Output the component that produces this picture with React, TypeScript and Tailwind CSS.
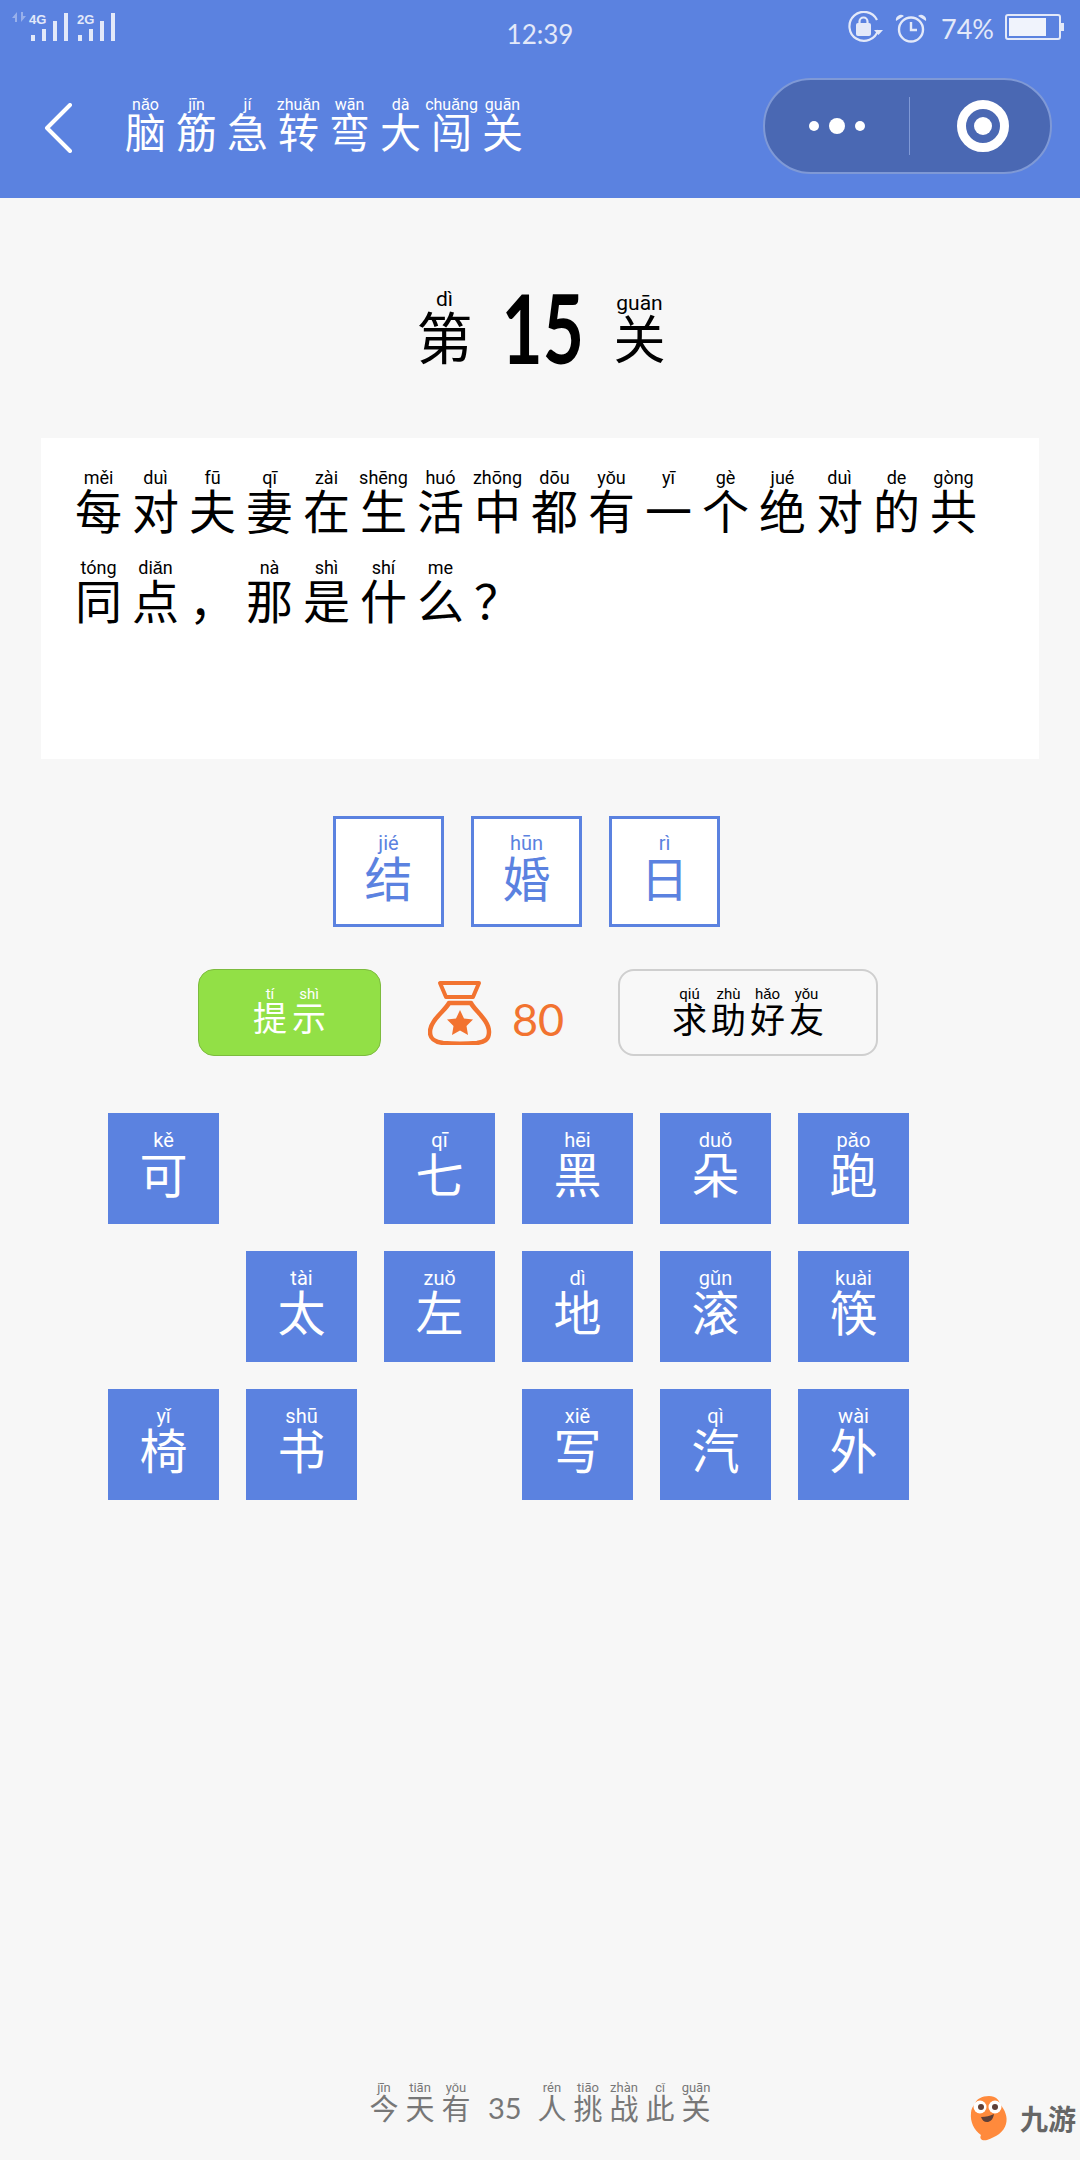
const blue = "#5B82E0";

type HanProps = {
  py?: string;
  ch: string;
  cell: string;
  pyCls: string;
  chCls: string;
};

function Han({ py, ch, cell, pyCls, chCls }: HanProps) {
  return (
    <span className={`flex shrink-0 flex-col items-center ${cell}`}>
      <span className={`whitespace-nowrap font-['Roboto',sans-serif] ${pyCls}`}>{py ?? "\u00a0"}</span>
      <span className={`font-['Noto_Sans_CJK_SC',sans-serif] leading-none ${chCls}`}>{ch}</span>
    </span>
  );
}

function SignalBars({ x }: { x: number }) {
  return (
    <>
      <rect x={x} y="35" width="4" height="6" />
      <rect x={x + 11} y="29" width="4" height="12" />
      <rect x={x + 22} y="21" width="4" height="20" />
      <rect x={x + 33} y="13" width="4" height="28" />
    </>
  );
}

function StatusBar() {
  return (
    <div className="grid h-[50px] grid-cols-3 text-[#e3e9f9]">
      <svg width="130" height="50" viewBox="0 0 130 50" fill="currentColor">
        <path d="M12 18l5-6v10h-2v-4zM26 16l-5 6V12h2v4z" opacity="0.45" />
        <text x="29" y="24" fontSize="13" fontWeight="700" fontFamily="Liberation Sans, sans-serif">4G</text>
        <SignalBars x={31} />
        <text x="77" y="24" fontSize="13" fontWeight="700" fontFamily="Liberation Sans, sans-serif">2G</text>
        <SignalBars x={78} />
      </svg>
      <div className="flex justify-center pt-[19px] font-['Lato',sans-serif] text-[26px] leading-[30px]">12:39</div>
      <div className="flex items-start justify-end pt-[11px] pr-[16px]">
        <svg width="37" height="32" viewBox="0 0 37 32" fill="none" stroke="currentColor" strokeWidth="2.200">
          <path d="M31 19a14.500 14.500 0 1 1-1-10" />
          <path d="M27 19h9l-4.500 5z" fill="currentColor" stroke="none" />
          <rect x="9" y="12" width="15" height="13" rx="2" fill="currentColor" stroke="none" />
          <path d="M12.500 13v-2.500a4 4 0 0 1 8 0V13" />
        </svg>
        <svg className="ml-[11px] mt-[2px]" width="32" height="30" viewBox="0 0 32 30" fill="none" stroke="currentColor" strokeWidth="2.400">
          <circle cx="16" cy="16.500" r="12" />
          <path d="M16 9v8h6" />
          <path d="M1 8a5 5 0 0 1 8-5zM31 8a5 5 0 0 0-8-5z" fill="currentColor" stroke="none" />
        </svg>
        <span className="ml-[14px] mt-[3px] font-['Lato',sans-serif] text-[27px] leading-[30px]">74%</span>
        <div className="ml-[11px] mt-[3px] flex items-center">
          <div className="h-[26px] w-[56px] rounded-[3px] border-2 border-[#e3e9f9] p-[2px]">
            <div className="h-full w-[37px] bg-[#f0f3fc]" />
          </div>
          <div className="h-[8px] w-[3px] bg-[#e3e9f9]" />
        </div>
      </div>
    </div>
  );
}

const navTitle: [string, string][] = [
  ["nǎo", "脑"], ["jīn", "筋"], ["jí", "急"], ["zhuǎn", "转"],
  ["wān", "弯"], ["dà", "大"], ["chuǎng", "闯"], ["guān", "关"],
];

function NavBar() {
  return (
    <div className="flex h-[148px] items-start text-white">
      <svg className="ml-[44px] mt-[53px]" width="29" height="50" viewBox="0 0 29 50" fill="none" stroke="white" strokeWidth="4" strokeLinecap="round" strokeLinejoin="round">
        <path d="M26 2L3 25l23 23" />
      </svg>
      <div className="ml-[47px] mt-[46px] flex">
        {navTitle.map(([py, ch]) => (
          <Han key={py} py={py} ch={ch} cell="w-[51px]" pyCls="-mb-[3px] text-[16px] leading-[17px]" chCls="text-[41px]" />
        ))}
      </div>
      <div className="ml-auto mr-[28px] mt-[28px] flex h-[96px] w-[289px] items-center rounded-[48px] border-2 border-[#7f99d6] bg-[#4A68B3]">
        <div className="flex w-[144px] items-center justify-center gap-[10px]">
          <span className="h-[10px] w-[10px] rounded-full bg-white" />
          <span className="h-[16px] w-[16px] rounded-full bg-white" />
          <span className="h-[10px] w-[10px] rounded-full bg-white" />
        </div>
        <div className="h-[58px] w-px bg-[#7f99d6]" />
        <div className="ml-[47px] flex h-[52px] w-[52px] items-center justify-center rounded-full border-[9px] border-white">
          <span className="h-[18px] w-[18px] rounded-full bg-white" />
        </div>
      </div>
    </div>
  );
}

const questionRows: [string | undefined, string][][] = [
  [
    ["měi", "每"], ["duì", "对"], ["fū", "夫"], ["qī", "妻"], ["zài", "在"], ["shēng", "生"], ["huó", "活"], ["zhōng", "中"],
    ["dōu", "都"], ["yǒu", "有"], ["yī", "一"], ["gè", "个"], ["jué", "绝"], ["duì", "对"], ["de", "的"], ["gòng", "共"],
  ],
  [
    ["tóng", "同"], ["diǎn", "点"], [undefined, "，"], ["nà", "那"], ["shì", "是"], ["shí", "什"], ["me", "么"], [undefined, "？"],
  ],
];

type Tile = { py: string; ch: string } | null;

const tiles: Tile[] = [
  { py: "kě", ch: "可" }, null, { py: "qī", ch: "七" }, { py: "hēi", ch: "黑" }, { py: "duǒ", ch: "朵" }, { py: "pǎo", ch: "跑" },
  null, { py: "tài", ch: "太" }, { py: "zuǒ", ch: "左" }, { py: "dì", ch: "地" }, { py: "gǔn", ch: "滚" }, { py: "kuài", ch: "筷" },
  { py: "yǐ", ch: "椅" }, { py: "shū", ch: "书" }, null, { py: "xiě", ch: "写" }, { py: "qì", ch: "汽" }, { py: "wài", ch: "外" },
];

const answers: [string, string][] = [["jié", "结"], ["hūn", "婚"], ["rì", "日"]];

const friendHelp: [string, string][] = [["qiú", "求"], ["zhù", "助"], ["hǎo", "好"], ["yǒu", "友"]];

const footerLeft: [string, string][] = [["jīn", "今"], ["tiān", "天"], ["yǒu", "有"]];
const footerRight: [string, string][] = [["rén", "人"], ["tiāo", "挑"], ["zhàn", "战"], ["cǐ", "此"], ["guān", "关"]];

function MoneyBag() {
  return (
    <svg width="64" height="64" viewBox="0 0 64 64" fill="none" stroke="#F27330" strokeWidth="4.500" strokeLinejoin="round">
      <path d="M12 2h39l-6 14H18z" strokeWidth="4" />
      <path d="M21 22h22c3 7 18 17 18 29 0 8-5 10-12 11-11 1-23 1-34 0-7-1-13-3-13-11 0-12 16-22 19-29z" />
      <path d="M32 29l4 8.500 9 1-6.500 6.500 1.500 9-8-4.500-8 4.500 1.500-9L19 38.500l9-1z" fill="#F27330" stroke="none" />
    </svg>
  );
}

function Watermark() {
  return (
    <div className="absolute bottom-[19px] right-[4px] flex items-center">
      <svg width="38" height="46" viewBox="0 0 38 46" className="mr-[12px]">
        <path d="M19 1c7 0 10 4 11 8 5 6 8 13 6 20-2 8-10 13-19 16-5 1-8-1-6-5C4 35 0 27 1 18c0-4 2-7 4-9C6 4 12 1 19 1z" fill="#FF8A3C" />
        <circle cx="10" cy="12" r="6.500" fill="#fff" />
        <circle cx="25" cy="12" r="6.500" fill="#fff" />
        <circle cx="11" cy="12" r="3" fill="#5f4038" />
        <circle cx="25" cy="12" r="3" fill="#5f4038" />
        <path d="M11 22c5 0 9-1 13-3-1 6-4 8-7 8-3 0-5-2-6-5z" fill="#5f4038" />
      </svg>
      <span className="font-['Noto_Sans_CJK_SC',sans-serif] text-[28px] font-bold leading-none text-[#666]">九游</span>
    </div>
  );
}

export default function App() {
  return (
    <main className="relative flex h-[2160px] w-[1080px] flex-col overflow-hidden bg-[#F7F7F7] text-black">
      <header className="h-[198px] shrink-0" style={{ backgroundColor: blue }}>
        <StatusBar />
        <NavBar />
      </header>

      <section className="mt-[87px] flex h-[83px] items-end justify-center gap-[28px]">
        <Han py="dì" ch="第" cell="mb-[5px] ml-[3px] w-[56px]" pyCls="-mb-[4px] text-[21px] leading-[24px]" chCls="text-[56px]" />
        <span className="flex w-[84px] justify-center">
          <span className="inline-block scale-x-[0.74] font-['Lato',sans-serif] text-[96px] font-bold leading-[83px]">15</span>
        </span>
        <Han py="guān" ch="关" cell="mb-[5px] w-[54px]" pyCls="-mb-[4px] text-[21px] leading-[24px]" chCls="text-[52px]" />
      </section>

      <section className="ml-[41px] mt-[70px] flex h-[321px] w-[998px] shrink-0 flex-col gap-[26px] bg-white pl-[29px] pt-[30px]">
        {questionRows.map((row, i) => (
          <div key={i} className="flex">
            {row.map(([py, ch], j) => (
              <Han key={j} py={py} ch={ch} cell="w-[57px]" pyCls="-mb-[3px] text-[18px] leading-[20px]" chCls="text-[47px]" />
            ))}
          </div>
        ))}
      </section>

      <section className="ml-[333px] mt-[57px] flex gap-[27px]">
        {answers.map(([py, ch]) => (
          <div key={ch} className="flex h-[111px] w-[111px] items-center justify-center border-[3px] border-[#5B82E0] bg-white pb-[12px] text-[#5B82E0]">
            <Han py={py} ch={ch} cell="w-[60px]" pyCls="-mb-[2px] text-[20px] leading-[22px]" chCls="text-[48px]" />
          </div>
        ))}
      </section>

      <section className="ml-[198px] mt-[42px] flex items-center">
        <button type="button" className="flex h-[87px] w-[183px] items-center justify-center gap-[1px] rounded-[16px] border border-[#7DBB3E] bg-[#92E046] pb-[6px] text-white">
          <Han py="tí" ch="提" cell="w-[38px]" pyCls="-mb-[2px] text-[15px] leading-[16px]" chCls="text-[34px]" />
          <Han py="shì" ch="示" cell="w-[38px]" pyCls="-mb-[2px] text-[15px] leading-[16px]" chCls="text-[34px]" />
        </button>
        <div className="flex w-[237px] items-center pl-[47px]">
          <MoneyBag />
          <span className="ml-[20px] mt-[14px] font-['Lato',sans-serif] text-[45px] leading-none text-[#F27330]">80</span>
        </div>
        <button type="button" className="flex h-[87px] w-[260px] items-center justify-center rounded-[16px] border-2 border-[#cfcfcf] bg-[#f8f8f8] pb-[4px]">
          {friendHelp.map(([py, ch]) => (
            <Han key={ch} py={py} ch={ch} cell="w-[39px]" pyCls="-mb-[2px] text-[15px] leading-[16px]" chCls="text-[35px]" />
          ))}
        </button>
      </section>

      <section className="ml-[108px] mt-[57px] grid grid-cols-[repeat(6,111px)] gap-[27px]">
        {tiles.map((tile, i) =>
          tile ? (
            <div key={i} className="flex h-[111px] items-center justify-center bg-[#5B82E0] pb-[13px] text-white">
              <Han py={tile.py} ch={tile.ch} cell="w-[60px]" pyCls="-mb-[3px] text-[20px] leading-[22px]" chCls="text-[48px]" />
            </div>
          ) : (
            <div key={i} className="h-[111px]" />
          ),
        )}
      </section>

      <footer className="mt-auto flex items-end justify-center pb-[38px] text-[#777]">
        {footerLeft.map(([py, ch]) => (
          <Han key={ch} py={py} ch={ch} cell="w-[36px]" pyCls="-mb-[2px] text-[13px] leading-[14px]" chCls="text-[29px]" />
        ))}
        <span className="ml-[14px] mr-[12px] w-[34px] font-['Lato',sans-serif] text-[29px] leading-[29px]">35</span>
        {footerRight.map(([py, ch]) => (
          <Han key={ch} py={py} ch={ch} cell="w-[36px]" pyCls="-mb-[2px] text-[13px] leading-[14px]" chCls="text-[29px]" />
        ))}
      </footer>

      <Watermark />
    </main>
  );
}
